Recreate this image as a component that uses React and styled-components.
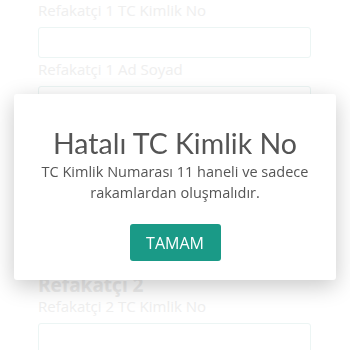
import React from "react";
import styled, { createGlobalStyle } from "styled-components";

const GlobalStyle = createGlobalStyle`
    html, body {
        margin: 0;
        padding: 0;
        background: #ffffff;
        font-family: "Open Sans", "Noto Sans", sans-serif;
    }
`

const Form = styled.div`
    width: 273px;
    padding-left: 38px;
    display: flex;
    flex-direction: column;
`

const Label = styled.div`
    font-size: 15px;
    line-height: 20px;
    color: #e8e8e8;
    margin-top: ${props => props.top || 0}px;
`

const Heading = styled.div`
    font-size: 19px;
    font-weight: 700;
    line-height: 22px;
    color: #e6e6e6;
    margin-top: ${props => props.top || 0}px;
`

const Input = styled.div`
    height: 29px;
    margin-top: 7px;
    border: 1px solid #e4f1ef;
    border-radius: 3px;
    background: #ffffff;
`

const Overlay = styled.div`
    position: fixed;
    inset: 0;
    background: rgba(255, 255, 255, 0.3);
`

const Modal = styled.div`
    position: fixed;
    left: 14px;
    top: 94px;
    width: 322px;
    height: 186px;
    background: #ffffff;
    border-radius: 3px;
    box-shadow: 0 6px 22px rgba(0, 0, 0, 0.22);
    display: flex;
    flex-direction: column;
    align-items: center;
    box-sizing: border-box;
    padding-top: 31px;
`

const Title = styled.div`
    font-family: "Lato", "Noto Sans", sans-serif;
    font-size: 28.5px;
    line-height: 36px;
    color: #545454;
`

const Message = styled.div`
    margin-top: 0;
    font-size: 14.5px;
    line-height: 21px;
    color: #555555;
    text-align: center;
    width: 290px;
`

const Button = styled.button`
    margin-top: 21px;
    width: 91px;
    height: 37px;
    border: none;
    border-radius: 3px;
    background: #1a9a87;
    color: #ffffff;
    font-family: "Open Sans", "Noto Sans", sans-serif;
    font-size: 16px;
    padding: 0;
`

const App = () => {
    return (
        <>
            <GlobalStyle />
            <Form>
                <Label>Refakatçi 1 TC Kimlik No</Label>
                <Input />
                <Label top={1}>Refakatçi 1 Ad Soyad</Label>
                <Input />
                <Label top={1}>Refakatçi 1 Telefon</Label>
                <Input />
                <Label top={1}>Refakatçi 1 Yakınlık</Label>
                <Input />
                <Heading top={39}>Refakatçi 2</Heading>
                <Label top={0}>Refakatçi 2 TC Kimlik No</Label>
                <Input />
            </Form>
            <Overlay />
            <Modal>
                <Title>Hatalı TC Kimlik No</Title>
                <Message>TC Kimlik Numarası 11 haneli ve sadece rakamlardan oluşmalıdır.</Message>
                <Button>TAMAM</Button>
            </Modal>
        </>
    )
}

export default App;
